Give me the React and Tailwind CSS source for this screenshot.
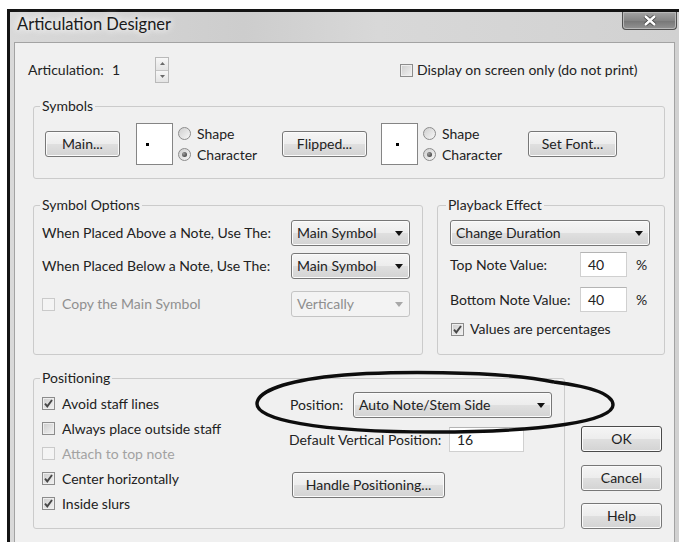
import React from "react";

// Win7-style push button
function Btn({ className = "", def = false, children }) {
  return (
    <div
      className={`flex h-[26px] shrink-0 items-center justify-center rounded-[3px] border ${
        def ? "border-[#4a4a4a]" : "border-[#777777]"
      } bg-[linear-gradient(#f5f5f5_0%,#ededed_48%,#dfdfdf_52%,#d3d3d3_100%)] shadow-[inset_0_0_0_1px_#fbfbfb] ${className}`}
    >
      {children}
    </div>
  );
}

function Arrow({ color = "#111" }) {
  return (
    <svg width="8" height="5" viewBox="0 0 8 5">
      <path d="M0 0H8L4 5Z" fill={color} />
    </svg>
  );
}

// Drop-down list (combo box in list mode)
function Combo({ className = "", disabled = false, children }) {
  return (
    <div
      className={`flex h-[26px] shrink-0 items-center justify-between rounded-[3px] border pl-[5px] pr-[6px] ${
        disabled
          ? "border-[#c4c4c4] bg-[#f3f3f3] text-[#8e8e8e]"
          : "border-[#777777] bg-[linear-gradient(#f5f5f5_0%,#ededed_48%,#dfdfdf_52%,#d3d3d3_100%)] shadow-[inset_0_0_0_1px_#fbfbfb]"
      } ${className}`}
    >
      <span>{children}</span>
      <Arrow color={disabled ? "#a8a8a8" : "#111"} />
    </div>
  );
}

function TextBox({ className = "", children }) {
  return (
    <div
      className={`flex h-[25px] shrink-0 items-center border border-[#d0d0d0] border-t-[#b4b4b4] bg-white pl-[7px] ${className}`}
    >
      {children}
    </div>
  );
}

function Check({ checked = false, disabled = false }) {
  return (
    <div
      className={`flex h-[13px] w-[13px] shrink-0 items-center justify-center border ${
        disabled
          ? "border-[#cacaca] bg-[#f4f4f4]"
          : "border-[#8c8c8c] bg-[linear-gradient(135deg,#cdcdcd,#f2f2f2)] shadow-[inset_0_0_0_1px_#eeeeee]"
      }`}
    >
      {checked && (
        <svg width="11" height="11" viewBox="0 0 11 11">
          <path d="M2 5.6L4.3 8.4L9 2" fill="none" stroke="#474747" strokeWidth="1.9" />
        </svg>
      )}
    </div>
  );
}

function Radio({ selected = false }) {
  return (
    <div className="flex h-[13px] w-[13px] shrink-0 items-center justify-center rounded-full border border-[#8c8c8c] bg-[linear-gradient(135deg,#cfcfcf,#f7f7f7)]">
      {selected && (
        <div className="h-[5px] w-[5px] rounded-full bg-[radial-gradient(circle_at_35%_35%,#9a9a9a,#2e2e2e)]" />
      )}
    </div>
  );
}

function RadioPair({ className = "" }) {
  return (
    <div className={`flex shrink-0 flex-col ${className}`}>
      <div className="flex h-[21px] items-center">
        <Radio />
        <span className="ml-[6px]">Shape</span>
      </div>
      <div className="flex h-[21px] items-center">
        <Radio selected />
        <span className="ml-[6px]">Character</span>
      </div>
    </div>
  );
}

function Spinner() {
  return (
    <div className="flex h-[26px] w-[14px] flex-col border border-[#b9b9b9] bg-[#efefef]">
      <div className="flex flex-1 items-center justify-center border-b border-[#c4c4c4] bg-[linear-gradient(#f7f7f7,#e4e4e4)]">
        <svg width="5" height="3" viewBox="0 0 5 3">
          <path d="M0 3H5L2.5 0Z" fill="#6a6a6a" />
        </svg>
      </div>
      <div className="flex flex-1 items-center justify-center bg-[linear-gradient(#f7f7f7,#e4e4e4)]">
        <svg width="5" height="3" viewBox="0 0 5 3">
          <path d="M0 0H5L2.5 3Z" fill="#6a6a6a" />
        </svg>
      </div>
    </div>
  );
}

export default function App() {
  return (
    <div className="h-[542px] w-[679px] overflow-hidden bg-white font-['Lato','Open_Sans',sans-serif] text-[14px] leading-[18px] text-[#222222]">
      {/* window frame */}
      <div className="ml-[7px] mt-[9px] h-[620px] border-l-[3px] border-t-[3px] border-[#141414] bg-[linear-gradient(90deg,#d9d9d9,#cdcdcd_35%,#d8d8d8_55%,#d1d1d1)]">
        {/* title bar */}
        <div className="flex h-[30px] items-start justify-between">
          <div className="pl-[7px] pt-[1px] text-[16.5px] leading-[22px] text-[#1a1a1a] [text-shadow:0_0_10px_#ffffff,0_0_6px_#f4f4f4]">
            Articulation Designer
          </div>
          <div className="mr-[2px] flex h-[18px] w-[55px] items-center justify-center rounded-b-[4px] border border-t-0 border-[#4f4f4f] bg-[linear-gradient(#a4a4a4,#858585_50%,#767676_51%,#939393)] shadow-[inset_0_0_0_1px_#b9b9b9]">
            <svg width="14" height="11" viewBox="0 0 14 11">
              <path d="M2 1L12 10M12 1L2 10" stroke="#3d3d3d" strokeWidth="4" />
              <path d="M2 1L12 10M12 1L2 10" stroke="#ffffff" strokeWidth="2.4" />
            </svg>
          </div>
        </div>

        {/* client area */}
        <div className="relative ml-[4px] mr-[4px] h-[600px] border border-[#a3a3a3] bg-[#f0f0f0] pl-[13px] pt-[14px]">
          {/* articulation row */}
          <div className="flex h-[26px] items-center">
            <span className="w-[84px] shrink-0">Articulation:</span>
            <span className="w-[43px] shrink-0">1</span>
            <Spinner />
            <div className="ml-[231px] flex items-center">
              <Check />
              <span className="ml-[4px] whitespace-nowrap">Display on screen only (do not print)</span>
            </div>
          </div>

          {/* Symbols */}
          <fieldset className="ml-[5px] mt-[14px] h-[82px] w-[632px] rounded-[3px] border border-[#cbcbcb] px-[6px]">
            <legend className="px-[2px] leading-[18px]">Symbols</legend>
            <div className="flex items-center pl-[5px] pt-[8px]">
              <Btn className="w-[75px]">Main...</Btn>
              <div className="ml-[16px] flex h-[42px] w-[37px] shrink-0 items-center border border-[#858585] bg-white pl-[9px]">
                <div className="h-[3px] w-[3px] bg-black" />
              </div>
              <RadioPair className="ml-[5px] w-[104px]" />
              <Btn className="w-[85px]">Flipped...</Btn>
              <div className="ml-[14px] flex h-[42px] w-[37px] shrink-0 items-center border border-[#858585] bg-white pl-[14px]">
                <div className="h-[3px] w-[3px] bg-black" />
              </div>
              <RadioPair className="ml-[5px] w-[105px]" />
              <Btn className="w-[89px]">Set Font...</Btn>
            </div>
          </fieldset>

          {/* Symbol Options + Playback Effect */}
          <div className="ml-[5px] mt-[17px] flex gap-[14px]">
            <fieldset className="h-[159px] w-[390px] rounded-[3px] border border-[#cbcbcb] px-[6px]">
              <legend className="px-[2px] leading-[18px]">Symbol Options</legend>
              <div className="pl-[2px] pt-[6px]">
                <div className="flex h-[26px] items-center">
                  <span className="w-[249px] shrink-0 whitespace-nowrap">When Placed Above a Note, Use The:</span>
                  <Combo className="w-[119px]">Main Symbol</Combo>
                </div>
                <div className="mt-[7px] flex h-[26px] items-center">
                  <span className="w-[249px] shrink-0 whitespace-nowrap">When Placed Below a Note, Use The:</span>
                  <Combo className="w-[119px]">Main Symbol</Combo>
                </div>
                <div className="mt-[12px] flex h-[26px] items-center">
                  <div className="flex w-[249px] shrink-0 items-center">
                    <Check disabled />
                    <span className="ml-[7px] text-[#8f8f8f]">Copy the Main Symbol</span>
                  </div>
                  <Combo disabled className="w-[119px]">Vertically</Combo>
                </div>
              </div>
            </fieldset>

            <fieldset className="h-[159px] w-[228px] rounded-[3px] border border-[#cbcbcb] px-[8px]">
              <legend className="px-[2px] leading-[18px]">Playback Effect</legend>
              <div className="pl-[4px] pt-[6px]">
                <Combo className="w-[200px]">Change Duration</Combo>
                <div className="mt-[6px] flex h-[25px] items-center">
                  <span className="w-[130px] shrink-0">Top Note Value:</span>
                  <TextBox className="w-[47px]">40</TextBox>
                  <span className="ml-[9px]">%</span>
                </div>
                <div className="mt-[10px] flex h-[25px] items-center">
                  <span className="w-[130px] shrink-0">Bottom Note Value:</span>
                  <TextBox className="w-[47px]">40</TextBox>
                  <span className="ml-[9px]">%</span>
                </div>
                <div className="ml-[1px] mt-[10px] flex h-[14px] items-center">
                  <Check checked />
                  <span className="ml-[6px] whitespace-nowrap">Values are percentages</span>
                </div>
              </div>
            </fieldset>
          </div>

          {/* Positioning + dialog buttons */}
          <div className="ml-[5px] mt-[14px] flex">
            <fieldset className="h-[160px] w-[532px] rounded-[3px] border border-[#cbcbcb] px-[6px]">
              <legend className="px-[2px] leading-[18px]">Positioning</legend>
              <div className="flex">
                <div className="w-[249px] shrink-0 pl-[2px] pt-[4px]">
                  <div className="flex h-[25px] items-center">
                    <Check checked />
                    <span className="ml-[7px]">Avoid staff lines</span>
                  </div>
                  <div className="flex h-[25px] items-center">
                    <Check />
                    <span className="ml-[7px]">Always place outside staff</span>
                  </div>
                  <div className="flex h-[25px] items-center">
                    <Check disabled />
                    <span className="ml-[7px] text-[#a2a2a2]">Attach to top note</span>
                  </div>
                  <div className="flex h-[25px] items-center">
                    <Check checked />
                    <span className="ml-[7px]">Center horizontally</span>
                  </div>
                  <div className="flex h-[25px] items-center">
                    <Check checked />
                    <span className="ml-[7px]">Inside slurs</span>
                  </div>
                </div>
                <div className="pt-[5px]">
                  <div className="flex h-[26px] items-center">
                    <span className="ml-[1px] w-[63px] shrink-0">Position:</span>
                    <Combo className="w-[199px]">Auto Note/Stem Side</Combo>
                  </div>
                  <div className="mt-[9px] flex h-[25px] items-center">
                    <span className="w-[160px] shrink-0 whitespace-nowrap">Default Vertical Position:</span>
                    <TextBox className="w-[75px]">16</TextBox>
                  </div>
                  <Btn className="ml-[3px] mt-[20px] w-[153px]">Handle Positioning...</Btn>
                </div>
              </div>
            </fieldset>

            <div className="ml-[16px] flex w-[81px] flex-col pt-[57px]">
              <Btn def className="w-[81px]">OK</Btn>
              <Btn className="mt-[13px] w-[81px]">Cancel</Btn>
              <Btn className="mt-[12px] w-[81px]">Help</Btn>
            </div>
          </div>

          {/* hand-drawn ring around the Position control */}
          <svg
            className="pointer-events-none absolute left-[239px] top-[326px]"
            width="366"
            height="70"
            viewBox="0 0 366 70"
          >
            <path
              d="M300 13 C250 2 130 1 70 8 C25 14 3 24 3 35 C3 50 60 63 180 63 C290 63 359 52 359 36 C359 26 340 18 300 13"
              fill="none"
              stroke="#0d0d0d"
              strokeWidth="3.4"
            />
          </svg>
        </div>
      </div>
    </div>
  );
}
